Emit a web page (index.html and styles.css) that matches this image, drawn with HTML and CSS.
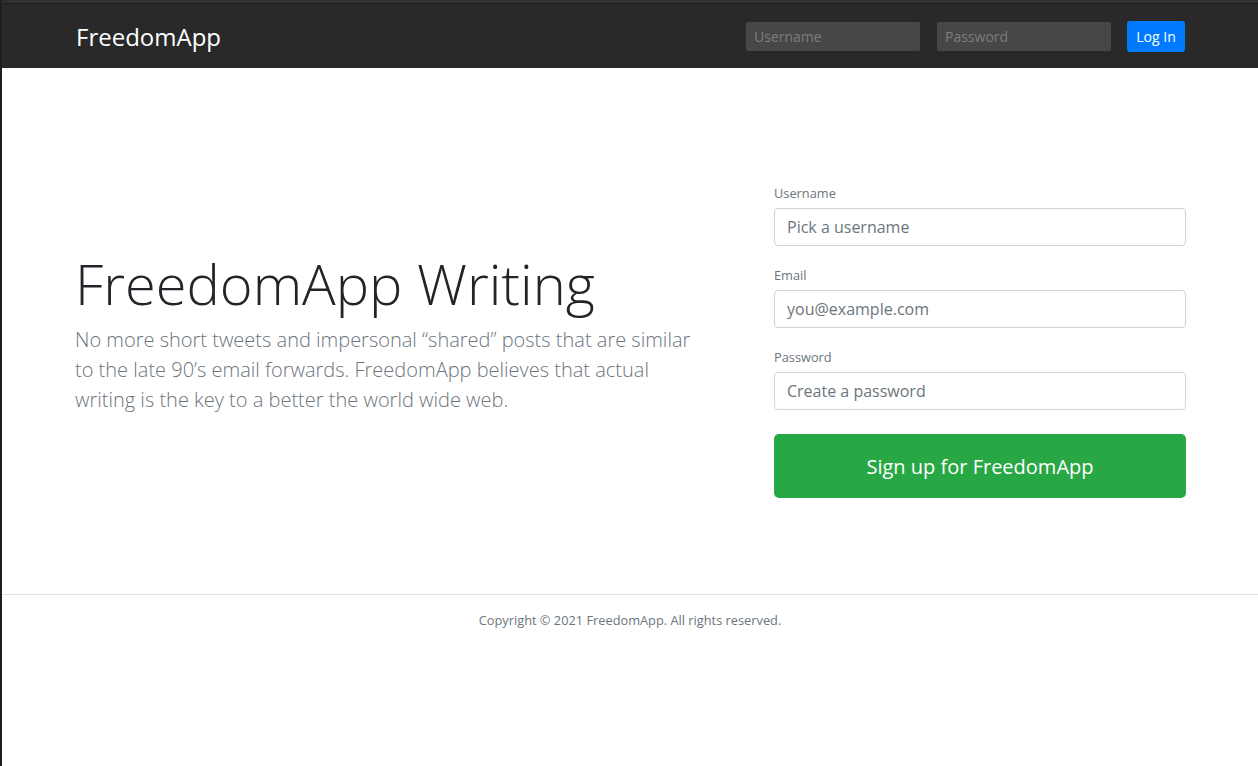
FILE: index.html
```html
<!DOCTYPE html>
<html lang="en">
<head>
<meta charset="utf-8">
<title>FreedomApp</title>
<link rel="stylesheet" href="styles.css">
</head>
<body>
<header class="topbar">
  <div class="container topbar-inner">
    <a class="brand" href="#">FreedomApp</a>
    <form class="login-form">
      <input class="nav-input" type="text" placeholder="Username">
      <input class="nav-input" type="password" placeholder="Password">
      <button class="btn-login" type="button">Log In</button>
    </form>
  </div>
</header>
<main class="container hero">
  <div class="hero-text">
    <h1 class="display">FreedomApp Writing</h1>
    <p class="lead">No more short tweets and impersonal “shared” posts that are similar to the late 90’s email forwards. FreedomApp believes that actual writing is the key to a better the world wide web.</p>
  </div>
  <form class="signup">
    <div class="field">
      <label class="field-label">Username</label>
      <input class="field-input" type="text" placeholder="Pick a username">
    </div>
    <div class="field">
      <label class="field-label">Email</label>
      <input class="field-input" type="text" placeholder="you@example.com">
    </div>
    <div class="field">
      <label class="field-label">Password</label>
      <input class="field-input" type="password" placeholder="Create a password">
    </div>
    <button class="btn-signup" type="button">Sign up for FreedomApp</button>
  </form>
</main>
<footer class="footer">
  <p class="copyright">Copyright © 2021 FreedomApp. All rights reserved.</p>
</footer>
</body>
</html>
```

FILE: styles.css
```css
* { box-sizing: border-box; }
html, body { margin: 0; padding: 0; }
body {
  font-family: "Open Sans", "Liberation Sans", sans-serif;
  color: #212529;
  background: #fff;
  border-left: 2px solid #1f1f1f;
  min-height: 766px;
}
.container {
  width: 1140px;
  margin: 0 auto;
  padding: 0 15px;
}
.topbar {
  background: #292929;
  height: 68px;
  border-top: 3px solid #303030;
  box-shadow: inset 0 1px 0 #1d1d1d;
}
.topbar-inner {
  display: flex;
  align-items: center;
  justify-content: space-between;
  height: 65px;
  padding-top: 2px;
}
.brand {
  color: #fff;
  text-decoration: none;
  font-size: 24px;
  line-height: 1;
  margin-left: 1px;
}
.login-form {
  display: flex;
  align-items: center;
}
.nav-input {
  width: 174px;
  height: 29px;
  background: #474747;
  border: none;
  border-radius: 2px;
  padding: 0 8px;
  font-family: inherit;
  font-size: 14px;
  color: #ddd;
  margin-right: 17px;
}
.nav-input:nth-child(2) { margin-right: 16px; }
.nav-input::placeholder { color: #7d7d7d; }
.btn-login {
  height: 31px;
  width: 58px;
  background: #007bff;
  color: #fff;
  border: none;
  border-radius: 3px;
  font-family: inherit;
  font-size: 14px;
  padding: 0;
}
.hero {
  display: flex;
  align-items: center;
  padding-top: 117px;
  padding-bottom: 96px;
}
.hero-text {
  flex: 0 0 665px;
  padding-right: 30px;
}
.display {
  font-size: 56px;
  font-weight: 300;
  line-height: 1.2;
  margin: 0 0 8px;
  color: #212529;
}
.lead {
  font-size: 20px;
  font-weight: 300;
  line-height: 1.5;
  color: #6c757d;
  margin: 0 0 18px;
}
.signup {
  flex: 0 0 412px;
  margin-left: 34px;
  margin-right: -1px;
  display: flex;
  flex-direction: column;
}
.field {
  display: flex;
  flex-direction: column;
  margin-bottom: 21px;
}
.field-label {
  font-size: 12.8px;
  line-height: 16px;
  color: #6c757d;
  margin-bottom: 7px;
}
.field-input {
  height: 38px;
  border: 1px solid #ced4da;
  border-radius: 4px;
  padding: 0 12px;
  font-family: inherit;
  font-size: 16px;
  color: #495057;
}
.field-input::placeholder { color: #6c757d; }
.btn-signup {
  margin-top: 3px;
  height: 64px;
  background: #28a745;
  color: #fff;
  border: none;
  border-radius: 5px;
  font-family: inherit;
  font-size: 20px;
}
.footer {
  border-top: 1px solid #dee2e6;
  text-align: center;
  padding-top: 16px;
}
.copyright {
  margin: 0;
  font-size: 12.8px;
  line-height: 1.5;
  color: #6c757d;
}
```
